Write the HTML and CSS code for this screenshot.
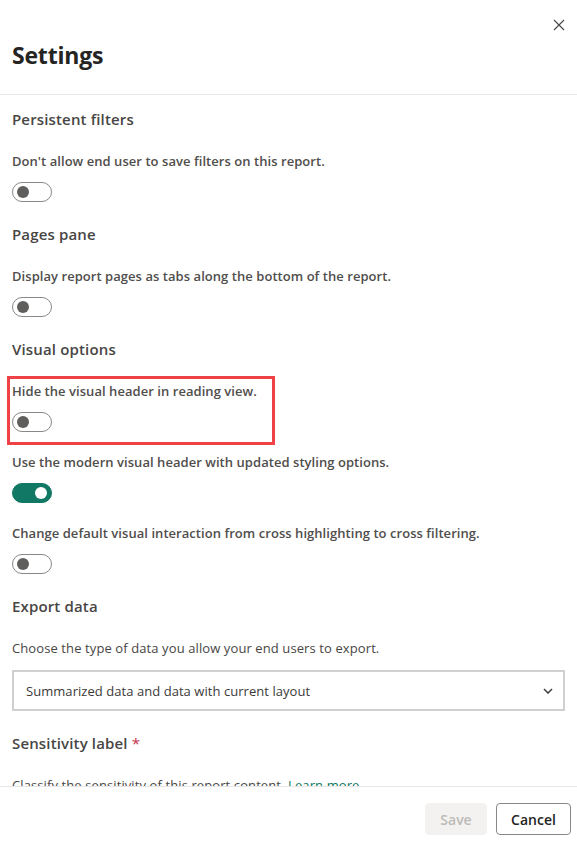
FILE: index.html
```html
<!DOCTYPE html>
<html lang="en">
<head>
<meta charset="utf-8">
<title>Settings</title>
<link rel="stylesheet" href="styles.css">
</head>
<body>
<div class="panel">
  <header class="panel-header">
    <h1 class="title">Settings</h1>
    <button class="close" aria-label="Close">
      <svg width="12" height="12" viewBox="0 0 12 12"><path d="M1 1 L11 11 M11 1 L1 11" stroke="#444" stroke-width="1.1" fill="none"/></svg>
    </button>
  </header>
  <main class="panel-body">
    <section class="section">
      <h2 class="heading">Persistent filters</h2>
      <div class="item">
        <p class="desc">Don't allow end user to save filters on this report.</p>
        <span class="toggle"></span>
      </div>
    </section>
    <section class="section">
      <h2 class="heading">Pages pane</h2>
      <div class="item">
        <p class="desc">Display report pages as tabs along the bottom of the report.</p>
        <span class="toggle"></span>
      </div>
    </section>
    <section class="section">
      <h2 class="heading">Visual options</h2>
      <div class="item highlighted">
        <p class="desc">Hide the visual header in reading view.</p>
        <span class="toggle"></span>
      </div>
      <div class="item">
        <p class="desc">Use the modern visual header with updated styling options.</p>
        <span class="toggle on"></span>
      </div>
      <div class="item">
        <p class="desc">Change default visual interaction from cross highlighting to cross filtering.</p>
        <span class="toggle"></span>
      </div>
    </section>
    <section class="section">
      <h2 class="heading">Export data</h2>
      <div class="item item-select">
        <p class="desc light">Choose the type of data you allow your end users to export.</p>
        <div class="select">
          <span>Summarized data and data with current layout</span>
          <svg width="10" height="6" viewBox="0 0 10 6"><path d="M1 1 L5 5 L9 1" stroke="#444" stroke-width="1.6" fill="none"/></svg>
        </div>
      </div>
    </section>
    <section class="section">
      <h2 class="heading">Sensitivity label <span class="req">*</span></h2>
      <div class="item">
        <p class="desc light">Classify the sensitivity of this report content. <a class="link" href="#">Learn more</a></p>
      </div>
    </section>
  </main>
  <footer class="panel-footer">
    <button class="btn btn-save" disabled>Save</button>
    <button class="btn btn-cancel">Cancel</button>
  </footer>
</div>
</body>
</html>
```

FILE: styles.css
```css
* { box-sizing: border-box; }
html, body { margin: 0; padding: 0; background: #fff; }
body {
  font-family: "Open Sans", "Noto Sans", "Liberation Sans", sans-serif;
  color: #323130;
}
.panel {
  width: 577px;
  height: 845px;
  display: flex;
  flex-direction: column;
  overflow: hidden;
}
.panel-header {
  position: relative;
  height: 95px;
  border-bottom: 1px solid #e6e6e6;
  display: flex;
  align-items: flex-start;
  padding: 39px 12px 0;
}
.title {
  margin: 0;
  font-size: 23px;
  font-weight: 700;
  line-height: 32px;
  color: #252423;
  letter-spacing: -0.2px;
}
.close {
  position: absolute;
  top: 18px;
  right: 11px;
  width: 14px;
  height: 14px;
  padding: 0;
  border: 0;
  background: none;
  display: flex;
  align-items: center;
  justify-content: center;
}
.panel-body {
  flex: 1;
  overflow: hidden;
  padding: 13px 12px 0;
  display: flex;
  flex-direction: column;
  gap: 21px;
}
.section {
  display: flex;
  flex-direction: column;
  gap: 20px;
}
.heading {
  margin: 0 0 1px;
  font-size: 15px;
  font-weight: 600;
  line-height: 22px;
  color: #484644;
  letter-spacing: 0.15px;
}
.req { color: #c4314b; font-weight: 400; }
.item {
  position: relative;
  display: flex;
  flex-direction: column;
  align-items: flex-start;
  gap: 11px;
}
.item-select { gap: 12px; margin-top: 0; }
.highlighted::before {
  content: "";
  position: absolute;
  left: -5px;
  top: -5px;
  width: 262px;
  height: 63px;
  border: 3px solid #ef4146;
}
.desc {
  margin: 0;
  font-size: 13px;
  line-height: 20px;
  font-weight: 600;
  color: #504e4c;
  letter-spacing: 0.05px;
}
.desc.light { font-weight: 400; color: #484644; letter-spacing: 0.1px; }
.link { color: #117865; text-decoration: none; }
.toggle {
  width: 40px;
  height: 20px;
  border: 1px solid #8a8886;
  border-radius: 10px;
  display: flex;
  align-items: center;
  padding: 0 4px;
}
.toggle::after {
  content: "";
  width: 12px;
  height: 12px;
  border-radius: 50%;
  background: #605e5c;
}
.toggle.on {
  background: #117865;
  border-color: #117865;
  justify-content: flex-end;
}
.toggle.on::after { background: #fff; }
.select {
  width: 553px;
  height: 41px;
  border: 2px solid #d2d0ce;
  display: flex;
  align-items: center;
  justify-content: space-between;
  padding: 0 10px 0 12px;
  font-size: 13px;
  color: #3b3a39;
  letter-spacing: 0.05px;
}
.panel-footer {
  height: 59px;
  flex-shrink: 0;
  border-top: 1px solid #e6e6e6;
  display: flex;
  justify-content: flex-end;
  align-items: flex-start;
  gap: 9px;
  padding: 16px 6px 0 0;
}
.btn {
  height: 32px;
  border-radius: 4px;
  font-family: inherit;
  font-size: 14px;
  font-weight: 600;
  padding: 0;
}
.btn-save {
  width: 62px;
  background: #f3f2f1;
  border: 1px solid #f3f2f1;
  color: #bdbbb8;
}
.btn-cancel {
  width: 75px;
  background: #fff;
  border: 1px solid #8a8886;
  color: #252423;
}
```
